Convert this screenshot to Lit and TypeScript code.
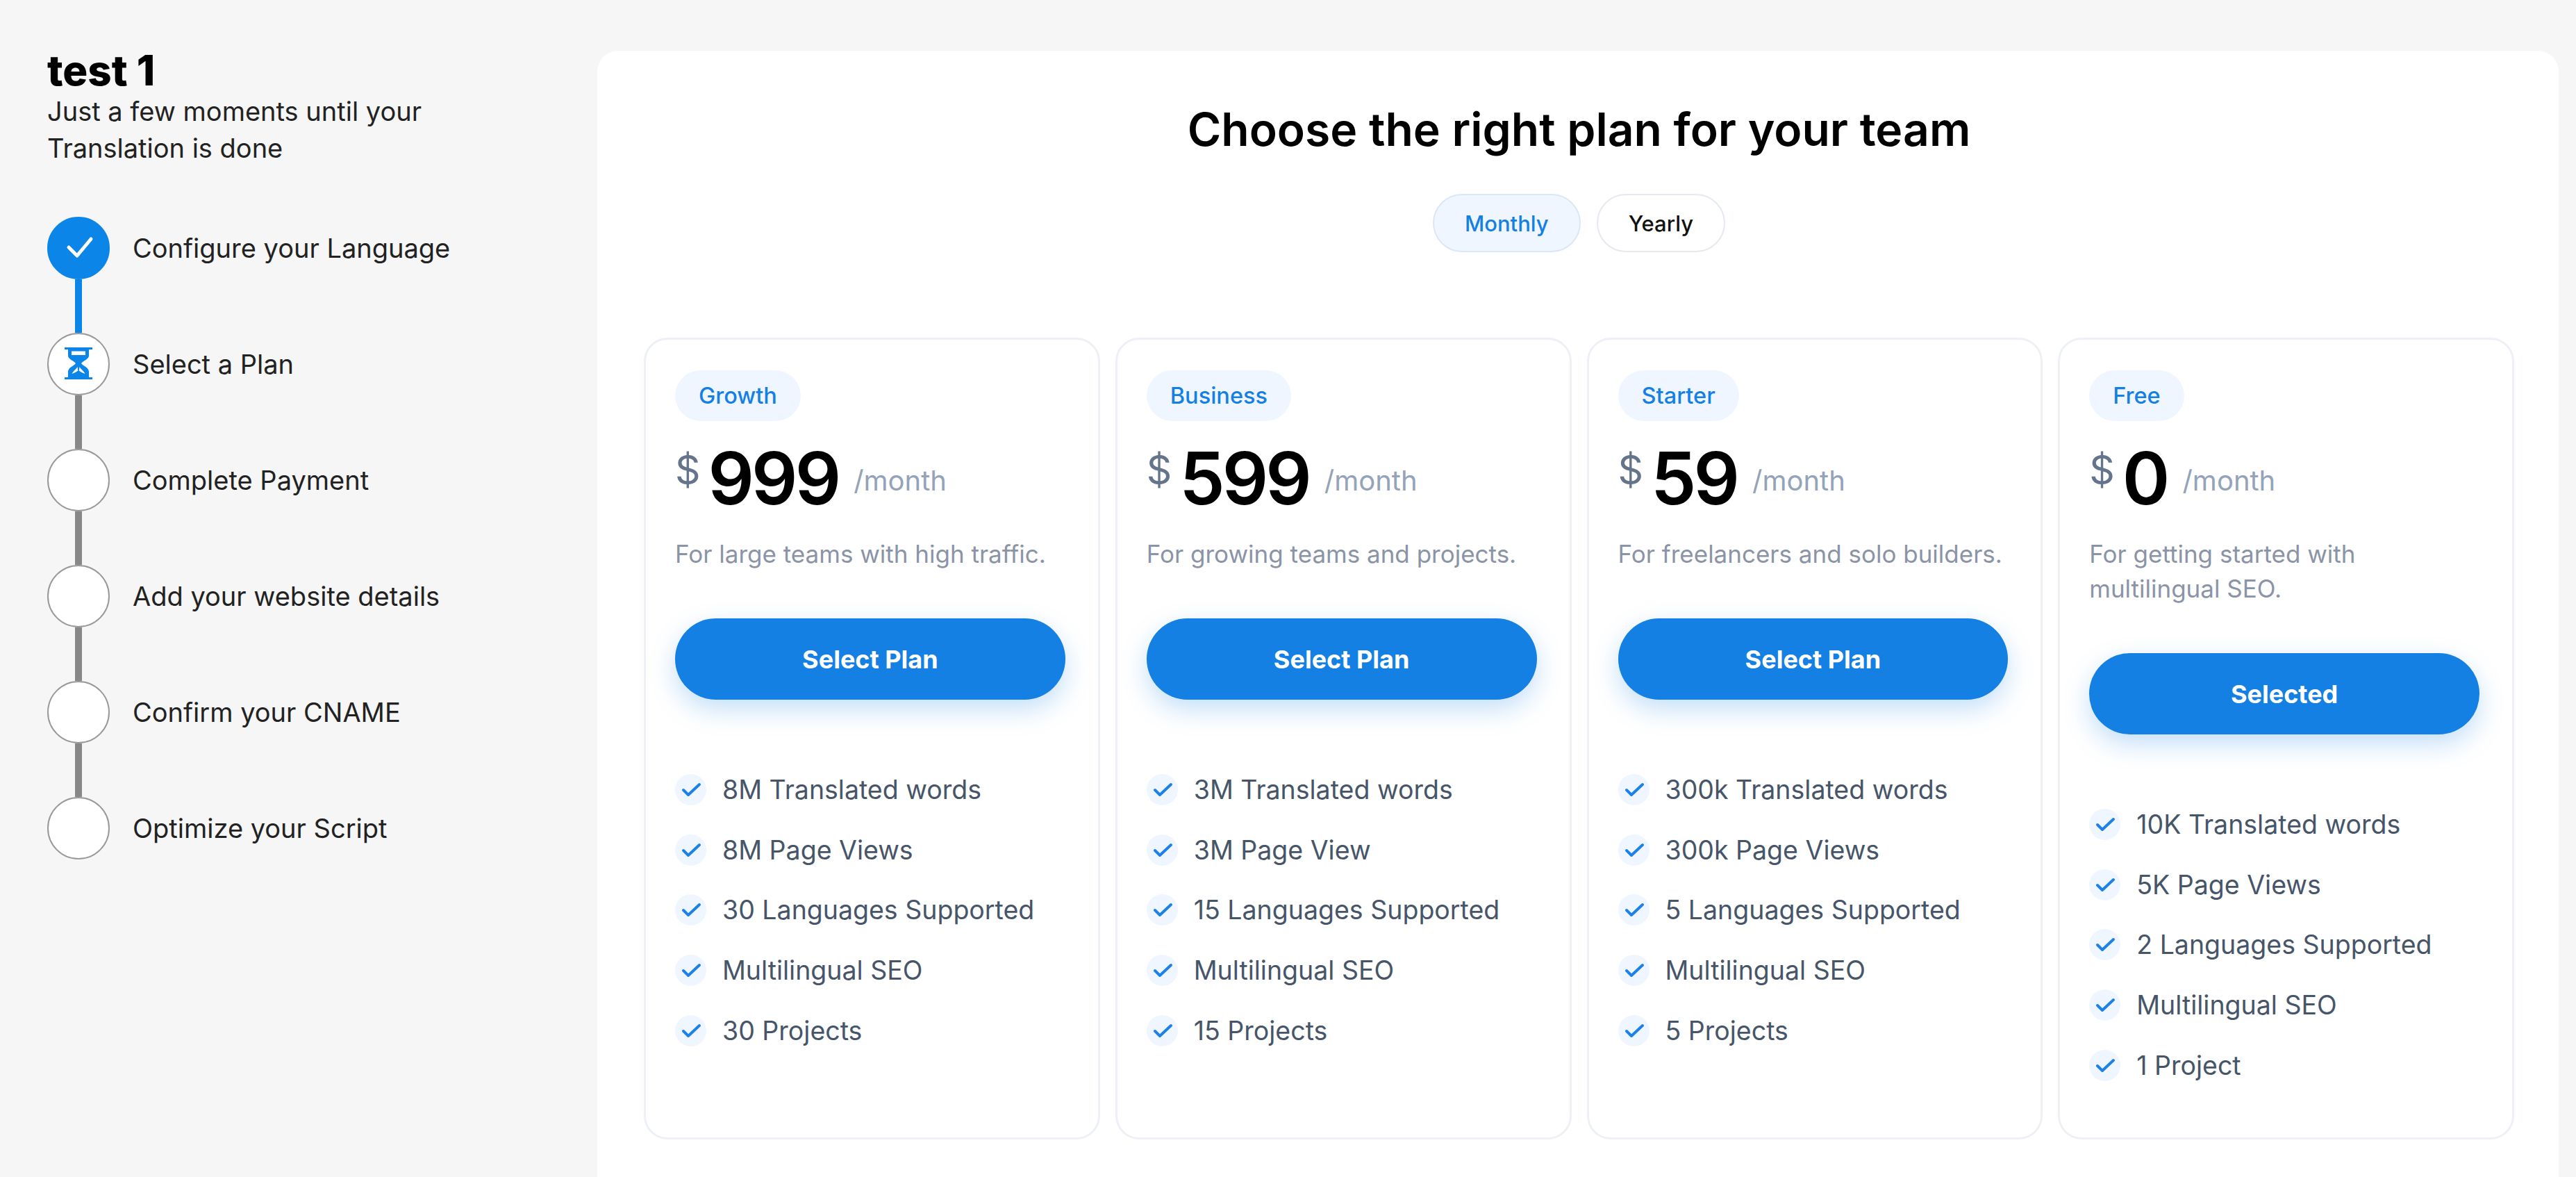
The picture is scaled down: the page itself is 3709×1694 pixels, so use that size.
import { LitElement, html, css, svg } from "lit";
import { customElement } from "lit/decorators.js";

const steps = ["Configure your Language", "Select a Plan", "Complete Payment", "Add your website details", "Confirm your CNAME", "Optimize your Script"];

const plans = [
  { tag: "Growth", price: "999", desc: "For large teams with high traffic.", cta: "Select Plan", features: ["8M Translated words", "8M Page Views", "30 Languages Supported", "Multilingual SEO", "30 Projects"] },
  { tag: "Business", price: "599", desc: "For growing teams and projects.", cta: "Select Plan", features: ["3M Translated words", "3M Page View", "15 Languages Supported", "Multilingual SEO", "15 Projects"] },
  { tag: "Starter", price: "59", desc: "For freelancers and solo builders.", cta: "Select Plan", features: ["300k Translated words", "300k Page Views", "5 Languages Supported", "Multilingual SEO", "5 Projects"] },
  { tag: "Free", price: "0", desc: "For getting started with multilingual SEO.", cta: "Selected", features: ["10K Translated words", "5K Page Views", "2 Languages Supported", "Multilingual SEO", "1 Project"] },
];

const stepCheck = svg`<path d="M31 44 43 56 63 32" fill="none" stroke="#fff" stroke-width="5" stroke-linecap="round" stroke-linejoin="round"/>`;
const hourglass = svg`<path fill="#0b86e8" fill-rule="evenodd" d="M0 0H40V3H35V12C35 17 27 19 24 23 27 27 35 29 35 35V43H40V46H0V43H5V35C5 29 13 27 16 23 13 19 5 17 5 12V3H0ZM10 5.500V11H30V5.500ZM18.500 28C17 31 13 33 10.500 38 14 36.500 17 35.500 19.300 33.500ZM21.500 28C23 31 27 33 29.500 38 26 36.500 23 35.500 20.700 33.500Z"/>`;

@customElement("app-root")
export class AppRoot extends LitElement {
  static styles = css`
    :host { display: block; width: 3709px; height: 1694px; overflow: hidden; background: #f6f6f6; font-family: Inter, "Noto Sans", sans-serif; color: #111; }
    * { box-sizing: border-box; }
    .page { display: flex; height: 1694px; padding: 73px 25px 0 68px; }
    .side { width: 792px; flex: none; }
    h1 { margin: -5px 0 0; font-size: 60px; line-height: 66px; font-weight: 800; color: #000; }
    .sub { margin: 0; width: 600px; font-size: 38px; line-height: 53px; color: #222; }
    .steps { margin-top: 72px; display: flex; flex-direction: column; }
    .step { display: flex; align-items: flex-start; }
    .rail { width: 90px; display: flex; flex-direction: column; align-items: center; margin-right: 33px; }
    .dot { width: 90px; height: 90px; border-radius: 50%; background: #fff; border: 2.5px solid #999; display: block; }
    .dot.done { background: #0b86e8; border-color: #0b86e8; }
    .dot svg { display: block; margin: -2.5px; width: 90px; height: 90px; }
    .line { width: 10px; height: 77px; background: #888; }
    .line.on { background: #0b86e8; }
    .label { height: 90px; display: flex; align-items: center; font-size: 38px; color: #222; white-space: nowrap; }
    .panel { flex: 1; background: #fff; border-radius: 30px 30px 0 0; padding: 0 64px 0 67px; display: flex; flex-direction: column; }
    h2 { margin: 78px 0 0; height: 70px; line-height: 70px; text-align: center; font-size: 66px; font-weight: 600; color: #000; white-space: nowrap; }
    .toggle { display: flex; justify-content: center; gap: 23px; margin-top: 58px; }
    .tbtn { height: 84px; padding: 0 44px; border-radius: 42px; border: 2px solid #e5e9f0; background: #fff; color: #111; font-size: 31px; font-weight: 500; display: flex; align-items: center; }
    .tbtn.on { background: #eff6ff; border-color: #dbe7f6; color: #1580e3; }
    .cards { display: grid; grid-template-columns: repeat(4, 1fr); gap: 22px; margin-top: 123px; height: 1154px; }
    .card { border: 3px solid #edf0f5; border-radius: 34px; padding: 44px 47px 0 42px; display: flex; flex-direction: column; align-items: stretch; }
    .tag { align-self: flex-start; height: 73px; padding: 0 34px; border-radius: 37px; background: #eff6ff; color: #1580e3; font-size: 32.500px; font-weight: 500; display: flex; align-items: center; }
    .price { display: flex; align-items: flex-start; margin-top: 22px; height: 120px; }
    .cur { font-size: 57px; line-height: 80px; color: #64748b; font-weight: 400; margin: 9px 11px 0 0; }
    .num { font-size: 104px; line-height: 120px; font-weight: 600; color: #000; letter-spacing: -4px; }
    .per { font-size: 40px; line-height: 44px; color: #94a3b8; margin-left: 22px; margin-top: 42px; }
    .desc { margin: 24px 0 0; font-size: 35px; line-height: 50px; color: #8a94a6; min-height: 50px; }
    .cta { margin-top: 68px; height: 117px; flex: none; border-radius: 59px; background: #1580e3; color: #fff; font-size: 36px; font-weight: 700; display: flex; align-items: center; justify-content: center; box-shadow: 0 14px 36px rgba(21, 128, 227, 0.25); }
    .feats { list-style: none; margin: 107px 0 0; padding: 0; display: flex; flex-direction: column; gap: 41.700px; }
    .feat { display: flex; align-items: center; height: 45px; font-size: 37.500px; color: #475569; white-space: nowrap; }
    .tick { width: 45px; height: 45px; border-radius: 50%; background: #eff6ff; margin-right: 23px; flex: none; }
    .tick svg { display: block; width: 45px; height: 45px; }
  `;

  render() {
    return html`<div class="page">
      <aside class="side">
        <h1>test 1</h1>
        <p class="sub">Just a few moments until your Translation is done</p>
        <div class="steps">
          ${steps.map((s, i) => html`<div class="step">
            <div class="rail">
              <span class="dot ${i === 0 ? "done" : ""}">
                ${i === 0 ? html`<svg viewBox="0 0 90 90">${stepCheck}</svg>` : ""}
                ${i === 1 ? html`<svg viewBox="-25 -21 90 90">${hourglass}</svg>` : ""}
              </span>
              ${i < steps.length - 1 ? html`<span class="line ${i === 0 ? "on" : ""}"></span>` : ""}
            </div>
            <div class="label">${s}</div>
          </div>`)}
        </div>
      </aside>
      <main class="panel">
        <h2>Choose the right plan for your team</h2>
        <div class="toggle"><div class="tbtn on">Monthly</div><div class="tbtn">Yearly</div></div>
        <div class="cards">
          ${plans.map((p) => html`<section class="card">
            <div class="tag">${p.tag}</div>
            <div class="price"><span class="cur">$</span><span class="num">${p.price}</span><span class="per">/month</span></div>
            <p class="desc">${p.desc}</p>
            <div class="cta">${p.cta}</div>
            <ul class="feats">
              ${p.features.map((f) => html`<li class="feat"><span class="tick"><svg viewBox="0 0 45 45"><path d="M12 23 19 30 35 15" fill="none" stroke="#1d82e8" stroke-width="4" stroke-linecap="round" stroke-linejoin="round"/></svg></span>${f}</li>`)}
            </ul>
          </section>`)}
        </div>
      </main>
    </div>`;
  }
}
